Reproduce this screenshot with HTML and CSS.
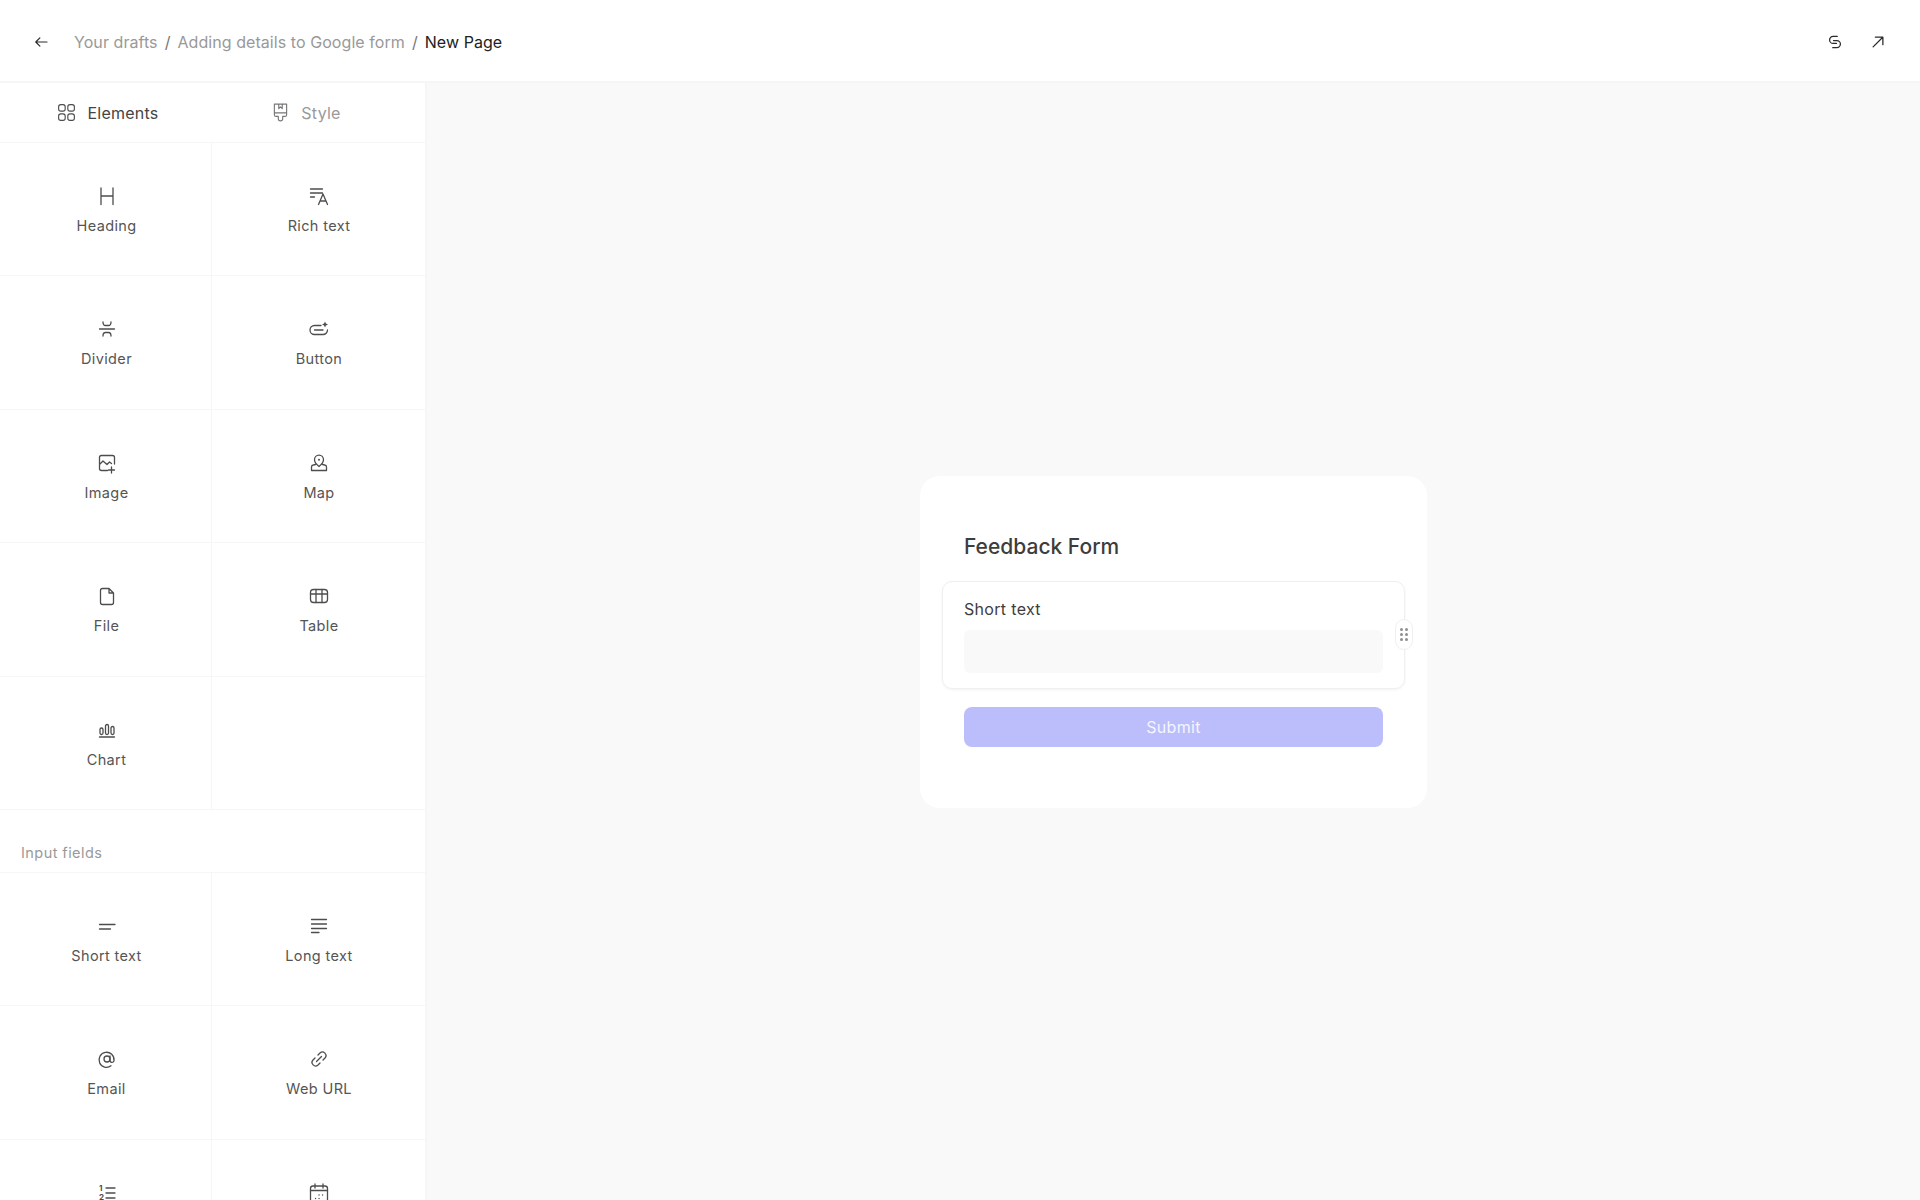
FILE: index.html
```html
<!DOCTYPE html>
<html lang="en">
<head>
  <meta charset="UTF-8" />
  <meta name="viewport" content="width=device-width, initial-scale=1" />
  <title>New Page</title>
  <link rel="stylesheet" href="styles.css">
</head>
<body>
  <header class="topbar">
    <button class="icon-btn back-btn" type="button" aria-label="Back">
      <svg class="icon" viewBox="0 0 24 24"><path d="M20 12H5M10.500 6.500L5 12l5.500 5.500"/></svg>
    </button>
    <nav class="crumbs" aria-label="Breadcrumb">
      <span>Your drafts</span>
      <span class="crumb-sep">/</span>
      <span>Adding details to Google form</span>
      <span class="crumb-sep">/</span>
      <span class="crumb-current">New Page</span>
    </nav>
    <div class="topbar-actions">
      <button class="icon-btn" type="button" aria-label="Share">
        <svg class="icon icon-dark" viewBox="0 0 24 24"><path d="M15 4.500H9.500a4.700 4.700 0 0 0 0 9.400H14M9 19.500h5.500a4.700 4.700 0 0 0 0-9.400H10"/></svg>
      </button>
      <button class="icon-btn" type="button" aria-label="Open">
        <svg class="icon icon-dark" viewBox="0 0 24 24"><path d="M5.500 18.500L18 6M8.500 5.500h10v10"/></svg>
      </button>
    </div>
  </header>

  <div class="workspace">
    <aside class="sidebar">
      <div class="tabs">
        <div class="tab tab-active">
          <svg class="icon" viewBox="0 0 24 24"><rect x="3" y="3" width="7.500" height="7.500" rx="2.500"/><rect x="13.500" y="3" width="7.500" height="7.500" rx="2.500"/><rect x="3" y="13.500" width="7.500" height="7.500" rx="2.500"/><rect x="13.500" y="13.500" width="7.500" height="7.500" rx="2.500"/></svg>
          <span>Elements</span>
        </div>
        <div class="tab">
          <svg class="icon" viewBox="0 0 24 24"><path d="M5 2.500h14v12a2 2 0 0 1-2 2h-2.500v2.500a2.500 2.500 0 0 1-5 0v-2.500H7a2 2 0 0 1-2-2zM5 12.500h14M10 3v4.500l2-2 2 2V3"/></svg>
          <span>Style</span>
        </div>
      </div>

      <div class="element-grid">
        <div class="element">
          <svg class="icon" viewBox="0 0 24 24"><path d="M6 4v16.500M18 4v16.500M6 12h12"/></svg>
          <span>Heading</span>
        </div>
        <div class="element">
          <svg class="icon" viewBox="0 0 24 24"><path d="M3.500 5h12M3.500 9h12M3.500 13h4M11.500 20.500l4.500-10.500 4.500 10.500M13 17h6"/></svg>
          <span>Rich text</span>
        </div>
        <div class="element">
          <svg class="icon" viewBox="0 0 24 24"><path d="M4.500 12h15M8 5c0 2 1 3.500 2.500 3.500h3c1.500 0 2.500-1.500 2.500-3.500M8 19c0-2 1-3.500 2.500-3.500h3c1.500 0 2.500 1.500 2.500 3.500"/></svg>
          <span>Divider</span>
        </div>
        <div class="element">
          <svg class="icon" viewBox="0 0 24 24"><path d="M14 8.500H7.500a4.500 4.500 0 0 0 0 9H16a4.500 4.500 0 0 0 4.500-4.500M7.500 13H16"/><path class="fill" d="M18 4.500l.9 2.100 2.100.9-2.100.9-.9 2.100-.9-2.100-2.100-.9 2.100-.9z"/></svg>
          <span>Button</span>
        </div>
        <div class="element">
          <svg class="icon" viewBox="0 0 24 24"><path d="M12.500 19.500H6.500a2 2 0 0 1-2-2v-11a2 2 0 0 1 2-2h11a2 2 0 0 1 2 2v6.500M4.500 13.500l3.500-3.500 4 3.500 2.500-2.500 2 1.500M16.500 16v6M13.500 19h6"/></svg>
          <span>Image</span>
        </div>
        <div class="element">
          <svg class="icon" viewBox="0 0 24 24"><path d="M12 15.500c-3-2.500-4.500-4.800-4.500-6.800a4.500 4.500 0 0 1 9 0c0 2-1.500 4.300-4.500 6.800zM8.500 13.500l-2.200.5a2 2 0 0 0-1.800 2v3.500h15V16a2 2 0 0 0-1.800-2l-2.200-.5"/><circle class="fill" cx="12" cy="8.700" r="1"/></svg>
          <span>Map</span>
        </div>
        <div class="element">
          <svg class="icon" viewBox="0 0 24 24"><path d="M7.500 4.500h6.500l4.500 4.500v9.500a2 2 0 0 1-2 2H7.500a2 2 0 0 1-2-2V6.500a2 2 0 0 1 2-2zM14 4.500V9h4.500"/></svg>
          <span>File</span>
        </div>
        <div class="element">
          <svg class="icon" viewBox="0 0 24 24"><rect x="3.500" y="5.500" width="17" height="13" rx="3"/><path d="M9 5.500v13M15 5.500v13M3.500 10h17"/></svg>
          <span>Table</span>
        </div>
        <div class="element">
          <svg class="icon" viewBox="0 0 24 24"><path d="M4.500 19h15"/><rect x="5" y="10" width="3" height="6.500" rx="1.500"/><rect x="10.500" y="6.500" width="3" height="10" rx="1.500"/><rect x="16" y="8.500" width="3" height="8" rx="1.500"/></svg>
          <span>Chart</span>
        </div>
        <div class="element"></div>
      </div>

      <div class="group-title">Input fields</div>

      <div class="element-grid">
        <div class="element">
          <svg class="icon" viewBox="0 0 24 24"><path d="M4.500 10.500h15.500M4.500 15h11"/></svg>
          <span>Short text</span>
        </div>
        <div class="element">
          <svg class="icon" viewBox="0 0 24 24"><path d="M4.500 5.500h15M4.500 10h15M4.500 14.500h15M4.500 18.500h7.500"/></svg>
          <span>Long text</span>
        </div>
        <div class="element">
          <svg class="icon" viewBox="0 0 24 24"><circle cx="12" cy="12" r="3"/><path d="M15 9v4.300a2 2 0 0 0 4 .2 7.500 7.500 0 1 0-3 5.300"/></svg>
          <span>Email</span>
        </div>
        <div class="element">
          <svg class="icon" viewBox="0 0 24 24"><path d="M11 8l2-2a3.540 3.540 0 0 1 5 5l-2 2M13 16l-2 2a3.540 3.540 0 0 1-5-5l2-2M9.500 14.500l5-5"/></svg>
          <span>Web URL</span>
        </div>
        <div class="element">
          <svg class="icon" viewBox="0 0 24 24"><text class="icon-digit" x="4" y="10">1</text><text class="icon-digit" x="4" y="18.500">2</text><path d="M11 7h9M11 12h9M11 17h9"/></svg>
        </div>
        <div class="element">
          <svg class="icon" viewBox="0 0 24 24"><rect x="3.500" y="5" width="17" height="16" rx="2.500"/><path d="M3.500 9.500h17M8 3v4M16 3v4M8.500 17.500h.1M12 17.500h.1M15.500 14h.1M12 14h.1"/></svg>
        </div>
      </div>
    </aside>

    <main class="canvas">
      <section class="form-card">
        <h2 class="form-title">Feedback Form</h2>
        <div class="field-block">
          <label class="field-label" for="short-text">Short text</label>
          <input class="field-input" id="short-text" type="text" />
          <div class="drag-handle" aria-hidden="true">
            <i></i><i></i><i></i><i></i><i></i><i></i>
          </div>
        </div>
        <button class="submit-btn" type="button">Submit</button>
      </section>
    </main>
  </div>
</body>
</html>
```

FILE: styles.css
```css
* {
  box-sizing: border-box;
}
html,
body {
  height: 100%;
}
body {
  margin: 0;
  display: flex;
  flex-direction: column;
  overflow: hidden;
  background: #f9f9f9;
  font-family: Inter, "Noto Sans", sans-serif;
  color: #333;
}
.icon {
  width: 24px;
  height: 24px;
  flex: none;
  fill: none;
  stroke: #4d4d4d;
  stroke-width: 1.3;
  stroke-linecap: round;
  stroke-linejoin: round;
}
.icon .fill {
  fill: #4d4d4d;
  stroke: none;
}
.icon-dark {
  stroke: #2b2b2b;
  width: 18px;
  height: 18px;
  stroke-width: 1.7;
}
.icon-digit {
  fill: #4d4d4d;
  stroke: none;
  font-size: 8px;
  font-weight: 700;
}
.icon-btn {
  display: flex;
  align-items: center;
  justify-content: center;
  width: 24px;
  height: 24px;
  padding: 0;
  border: none;
  background: none;
}
.topbar {
  display: flex;
  align-items: center;
  height: 83px;
  flex: none;
  padding: 2px 30px 0 29px;
  background: #fff;
  border-bottom: 2px solid #f6f6f6;
}
.back-btn .icon {
  width: 18px;
  height: 18px;
  stroke: #2b2b2b;
  stroke-width: 1.6;
}
.crumbs {
  display: flex;
  gap: 7px;
  margin-left: 21px;
  font-size: 16px;
  letter-spacing: 0.004em;
  color: #999;
}
.crumb-sep {
  color: #777;
}
.crumb-current {
  color: #222;
}
.topbar-actions {
  display: flex;
  gap: 19px;
  margin-left: auto;
}
.workspace {
  display: flex;
  flex: 1;
  min-height: 0;
}
.sidebar {
  width: 427px;
  flex: none;
  overflow: hidden;
  background: #fff;
  border-right: 2px solid #f6f6f6;
}
.tabs {
  display: grid;
  grid-template-columns: 215px 181px;
  height: 60px;
  border-bottom: 1px solid #f6f6f6;
}
.tab {
  display: flex;
  align-items: center;
  justify-content: center;
  gap: 10px;
  font-size: 16px;
  letter-spacing: 0.015em;
  color: #999;
}
.tab-active {
  color: #444;
}
.tab .icon {
  width: 21px;
  height: 21px;
}
.tab:not(.tab-active) .icon {
  stroke: #777;
}
.element-grid {
  display: grid;
  grid-template-columns: 212px 213px;
  grid-auto-rows: 133.4px;
}
.element {
  display: flex;
  flex-direction: column;
  align-items: center;
  gap: 8px;
  padding: 41px 0 0 1px;
  font-size: 14.500px;
  line-height: 20px;
  letter-spacing: 0.025em;
  color: #555;
  border-bottom: 1px solid #f6f6f6;
}
.element:nth-child(odd) {
  padding-left: 2px;
  border-right: 1px solid #f6f6f6;
}
.group-title {
  display: flex;
  align-items: center;
  height: 63px;
  padding: 23px 0 0 21px;
  font-size: 14.500px;
  letter-spacing: 0.03em;
  color: #999;
  border-bottom: 1px solid #f6f6f6;
}
.canvas {
  flex: 1;
  display: flex;
  align-items: center;
  justify-content: center;
}
.form-card {
  width: 507px;
  height: 332px;
  padding: 56px 22px 0;
  background: #fff;
  border-radius: 20px;
}
.form-title {
  margin: 0 0 19px 22px;
  font-size: 21px;
  line-height: 30px;
  font-weight: 500;
  color: #3d3d3d;
}
.field-block {
  position: relative;
  height: 108px;
  padding: 16px 21px 0;
  border: 1px solid #efefef;
  border-radius: 10px;
  box-shadow: 0 1px 3px rgba(0, 0, 0, 0.05);
}
.field-label {
  display: block;
  font-size: 16px;
  line-height: 22px;
  letter-spacing: 0.02em;
  color: #3d3d3d;
}
.field-input {
  display: block;
  width: 100%;
  height: 43px;
  margin-top: 10px;
  border: none;
  border-radius: 6px;
  background: #f9f9f9;
}
.drag-handle {
  position: absolute;
  top: 37px;
  right: -9px;
  display: grid;
  grid-template-columns: 3px 3px;
  grid-auto-rows: 3px;
  gap: 2px;
  align-content: center;
  justify-content: center;
  width: 18px;
  height: 31px;
  background: #fff;
  border: 1px solid #f0f0f0;
  border-radius: 9px;
}
.drag-handle i {
  background: #8f8f8f;
  border-radius: 50%;
}
.submit-btn {
  display: block;
  width: 419px;
  height: 40px;
  margin: 18px 0 0 22px;
  border: none;
  border-radius: 8px;
  background: #bbbefb;
  font: inherit;
  font-size: 16px;
  letter-spacing: 0.02em;
  color: #f5f5ff;
}
```
